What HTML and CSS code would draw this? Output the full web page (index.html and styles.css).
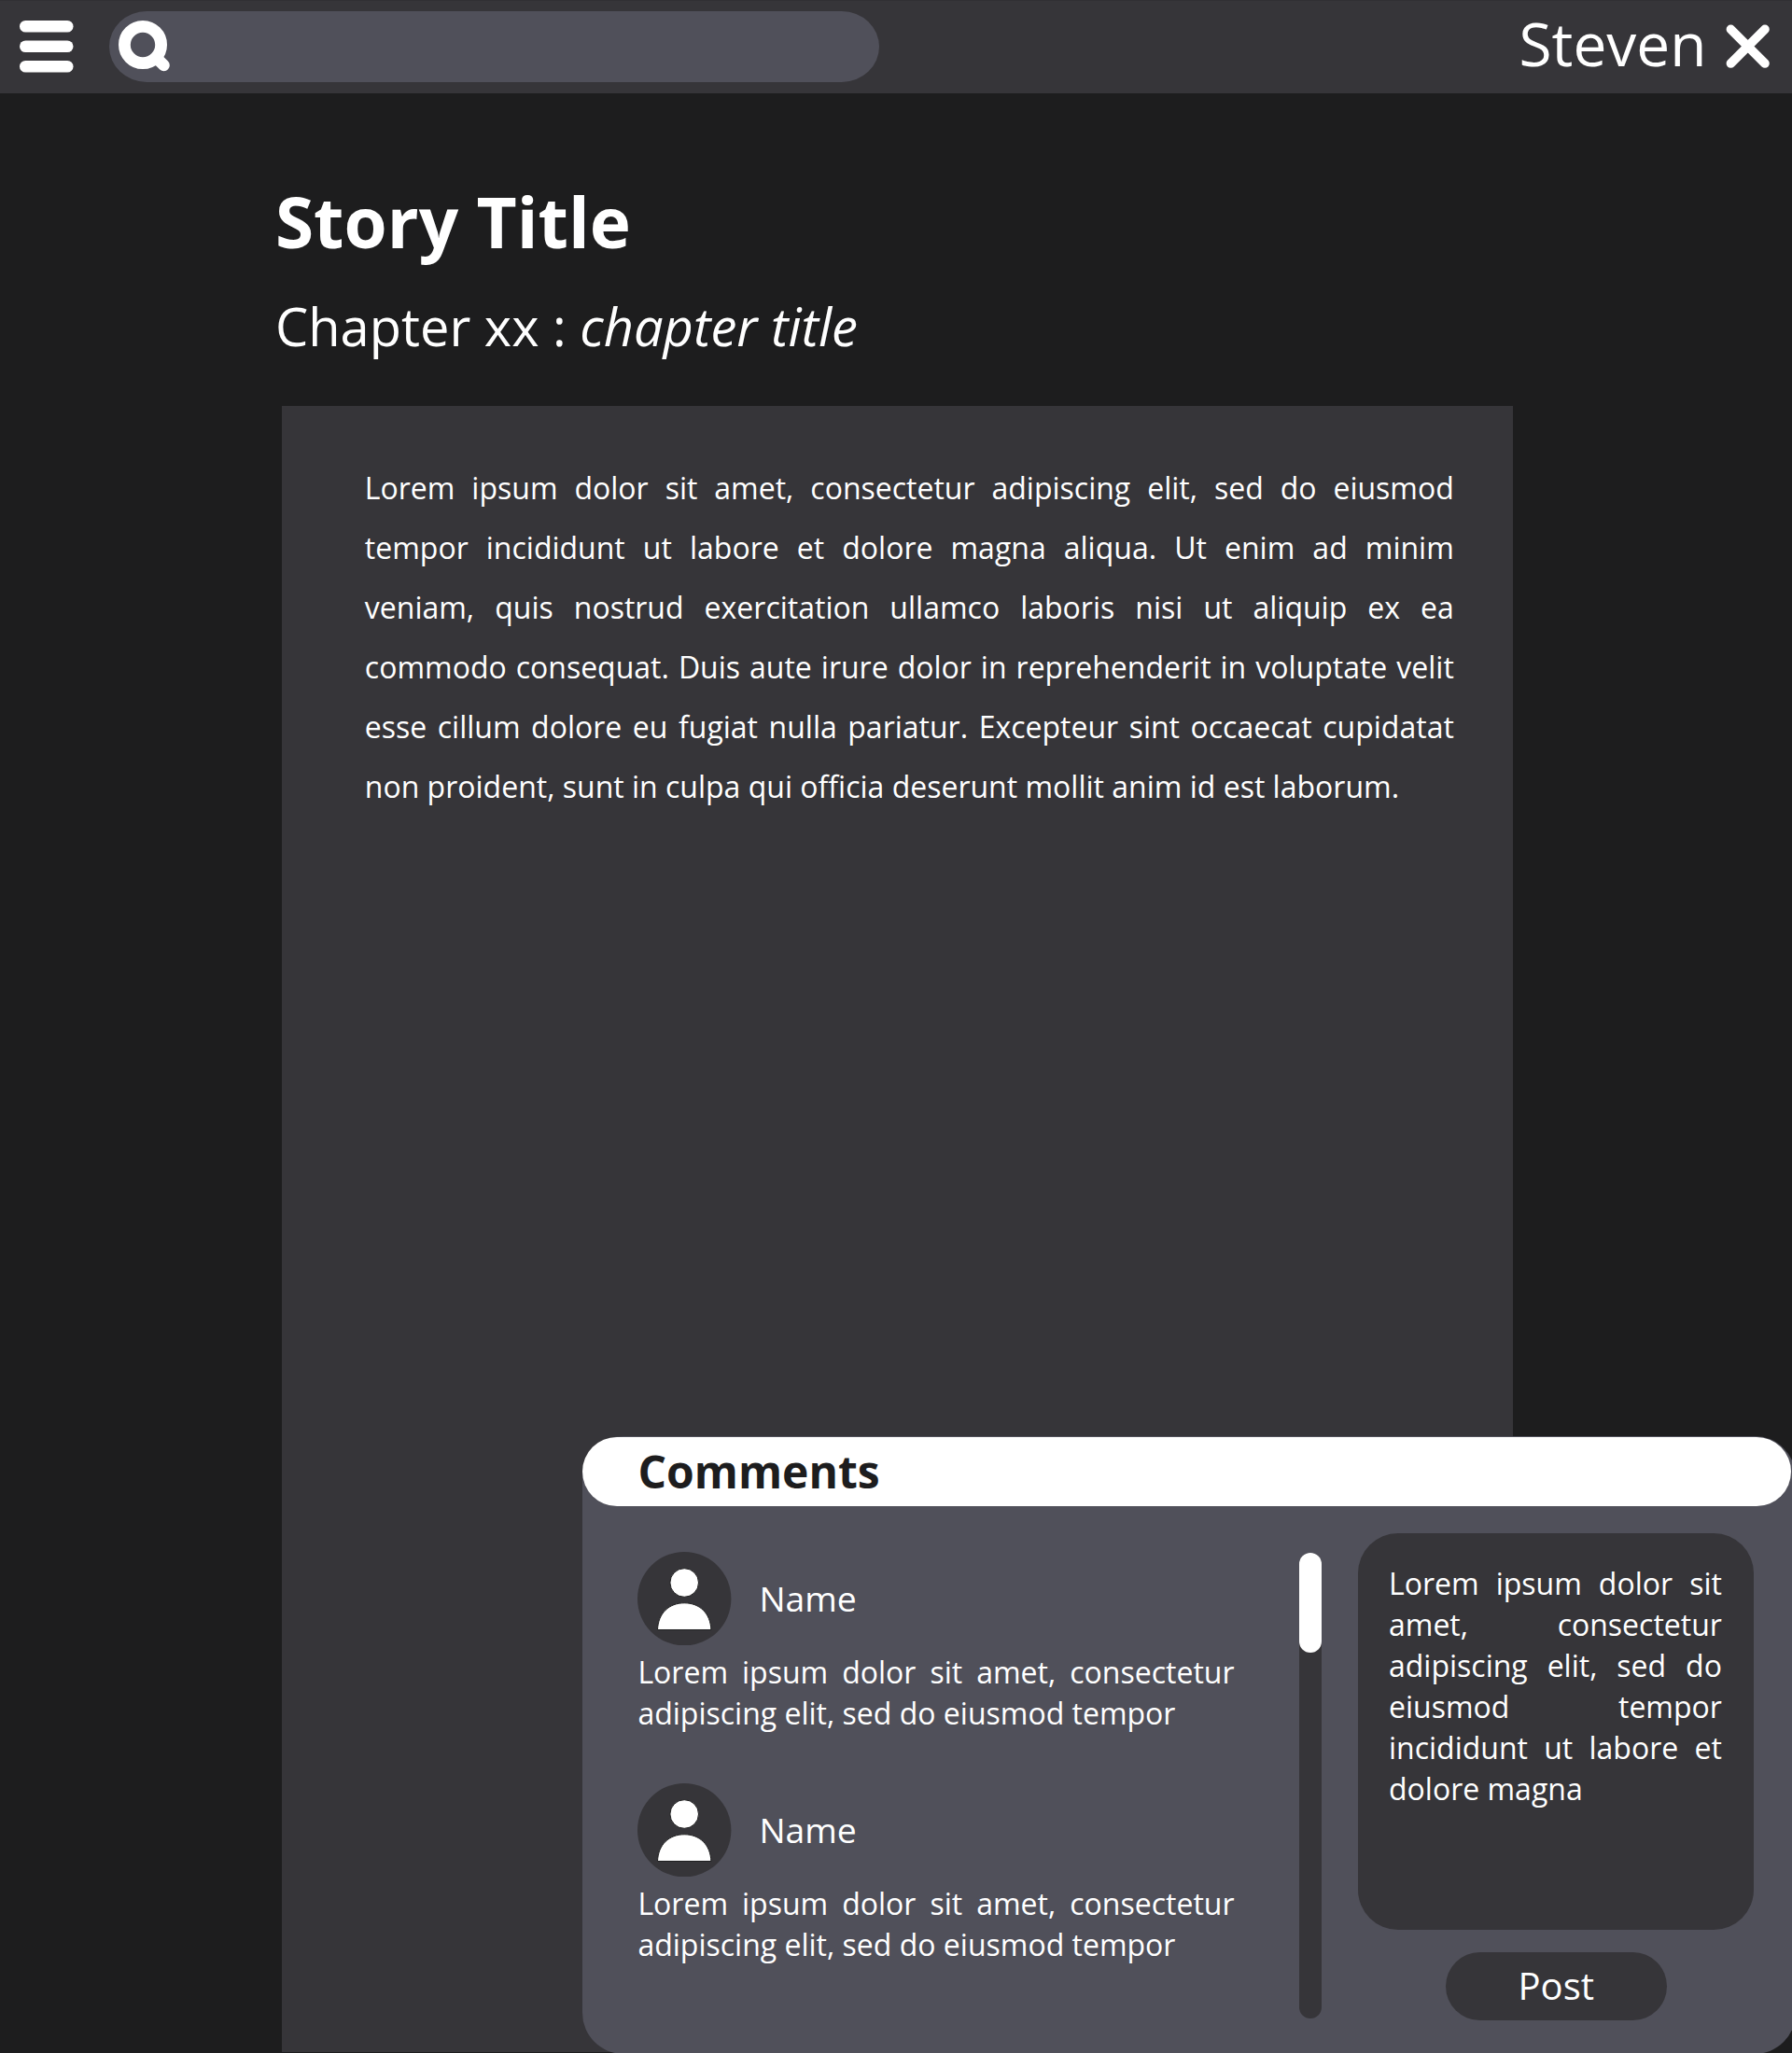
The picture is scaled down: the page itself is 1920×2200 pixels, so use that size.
FILE: index.html
```html
<!DOCTYPE html>
<html lang="en">
<head>
<meta charset="utf-8">
<title>Story Title</title>
<link rel="stylesheet" href="styles.css">
</head>
<body>
<header class="topbar">
  <svg class="menu" viewBox="0 0 58 56" aria-label="Menu">
    <rect x="0" y="0" width="57.5" height="12.6" rx="6.3"/>
    <rect x="0" y="21.4" width="57.5" height="12.6" rx="6.3"/>
    <rect x="0" y="43" width="57.5" height="12.6" rx="6.3"/>
  </svg>
  <div class="search">
    <svg class="search-icon" viewBox="0 0 56 56" aria-label="Search">
      <circle cx="26" cy="26" r="19.6" stroke-width="12.8"/>
      <path d="M43 42.5L48.6 48" stroke-width="12.4"/>
    </svg>
  </div>
  <div class="user">Steven</div>
  <svg class="close" viewBox="0 0 48 48" aria-label="Close">
    <path d="M5.4 5.4L42 42M42 5.4L5.4 42"/>
  </svg>
</header>

<main class="page">
  <h1 class="title">Story Title</h1>
  <h2 class="chapter">Chapter xx : <em>chapter title</em></h2>
  <article class="story">
    <p>Lorem ipsum dolor sit amet, consectetur adipiscing elit, sed do eiusmod tempor incididunt ut labore et dolore magna aliqua. Ut enim ad minim veniam, quis nostrud exercitation ullamco laboris nisi ut aliquip ex ea commodo consequat. Duis aute irure dolor in reprehenderit in voluptate velit esse cillum dolore eu fugiat nulla pariatur. Excepteur sint occaecat cupidatat non proident, sunt in culpa qui officia deserunt mollit anim id est laborum.</p>
  </article>
</main>

<section class="comments">
  <h3 class="comments-head">Comments</h3>
  <div class="comments-body">
    <div class="list">
      <div class="comment">
        <div class="author">
          <svg class="avatar" viewBox="0 0 100.4 100.4">
            <circle class="disc" cx="50.2" cy="50.2" r="50.2"/>
            <circle class="figure" cx="50.2" cy="33" r="15.3"/>
            <path class="figure" d="M21.5 83.5C22.2 65.5 34 54.8 50.2 54.8S78.2 65.5 78.9 83.5Z"/>
          </svg>
          <span class="name">Name</span>
        </div>
        <p class="text">Lorem ipsum dolor sit amet, consectetur adipiscing elit, sed do eiusmod tempor</p>
      </div>
      <div class="comment">
        <div class="author">
          <svg class="avatar" viewBox="0 0 100.4 100.4">
            <circle class="disc" cx="50.2" cy="50.2" r="50.2"/>
            <circle class="figure" cx="50.2" cy="33" r="15.3"/>
            <path class="figure" d="M21.5 83.5C22.2 65.5 34 54.8 50.2 54.8S78.2 65.5 78.9 83.5Z"/>
          </svg>
          <span class="name">Name</span>
        </div>
        <p class="text">Lorem ipsum dolor sit amet, consectetur adipiscing elit, sed do eiusmod tempor</p>
      </div>
    </div>
    <div class="scrollbar"><div class="thumb"></div></div>
    <div class="compose">
      <div class="draft"><p class="text">Lorem ipsum dolor sit amet, consectetur adipiscing elit, sed do eiusmod tempor incididunt ut labore et dolore magna</p></div>
      <button class="post">Post</button>
    </div>
  </div>
</section>
</body>
</html>
```
FILE: styles.css
```css
* { box-sizing: border-box; }

body {
  position: relative;
  margin: 0;
  width: 1920px;
  height: 2200px;
  overflow: hidden;
  background: #1d1d1e;
  color: #fff;
  font-family: "Open Sans", "Noto Sans", sans-serif;
}

h1, h2, h3, p { margin: 0; }

.topbar {
  display: flex;
  align-items: center;
  height: 100px;
  padding: 0 23.5px 0 21.3px;
  background: #363539;
  box-shadow: inset 0 1px #302f33;
}

.menu {
  width: 58px;
  height: 56px;
  fill: #fff;
}

.search {
  display: flex;
  align-items: center;
  width: 825px;
  height: 76px;
  margin-left: 37.7px;
  padding-left: 10.3px;
  border-radius: 40px / 38px;
  background: #50505a;
}

.search-icon {
  width: 56px;
  height: 56px;
  margin-top: -1px;
  fill: none;
  stroke: #fff;
  stroke-linecap: round;
}

.user {
  margin: -6px 0 0 auto;
  font-size: 64px;
  line-height: 88px;
}

.close {
  width: 48px;
  height: 48px;
  margin-left: 20px;
  fill: none;
  stroke: #fff;
  stroke-width: 9.6;
  stroke-linecap: round;
}

.page {
  display: flex;
  flex-direction: column;
  height: 2099px;
  padding: 87px 299px 0 295px;
}

.title {
  font-size: 74.67px;
  line-height: 100px;
}

.chapter {
  margin-top: 24px;
  font-size: 56px;
  font-weight: 400;
  line-height: 76px;
}

.story {
  flex: 1;
  margin: 48px 0 0 7px;
  padding: 56px 63.2px 0 88.8px;
  background: #363539;
  font-size: 32px;
  line-height: 64px;
  text-align: justify;
}

.comments {
  position: absolute;
  left: 624px;
  top: 1538.5px;
  width: 1300px;
  height: 662.5px;
  padding-top: 1.5px;
  border-radius: 44px;
  background: #50505a;
}

.comments-head {
  width: 1295px;
  height: 73.5px;
  padding-left: 59.5px;
  border-radius: 37px;
  background: #fff;
  color: #1d1d1e;
  font-size: 48px;
  line-height: 74px;
}

.comments-body {
  display: flex;
  align-items: flex-start;
  padding: 29.5px 0 0 59.4px;
}

.list {
  width: 639.1px;
  margin-top: 19.5px;
}

.comment { height: 248.4px; }

.author {
  display: flex;
  align-items: center;
  height: 100.4px;
}

.avatar {
  width: 100.4px;
  height: 100.4px;
}

.disc { fill: #363539; }

.figure {
  fill: #fff;
  stroke: #1d1d1e;
  stroke-width: 1;
}

.name {
  margin-left: 29.6px;
  font-size: 37.33px;
  line-height: 50px;
}

.text {
  font-size: 32px;
  line-height: 44px;
  text-align: justify;
}

.comment .text { margin-top: 7px; }

.scrollbar {
  width: 24px;
  height: 499px;
  margin: 21px 0 0 69.5px;
  border-radius: 12px;
  background: #363539;
}

.thumb {
  height: 107px;
  border-radius: 12px;
  background: #fff;
}

.compose {
  display: flex;
  flex-direction: column;
  align-items: center;
  width: 424.6px;
  margin-left: 38.7px;
}

.draft {
  width: 100%;
  height: 424.5px;
  padding: 32px 34.4px 0 33.3px;
  border-radius: 43px;
  background: #363539;
}

.post {
  width: 236.6px;
  height: 73.5px;
  margin: 24px 0 0 0.6px;
  padding: 0;
  border: 0;
  border-radius: 37px;
  background: #363539;
  color: #fff;
  font: 40px/72px "Open Sans", "Noto Sans", sans-serif;
}
```
